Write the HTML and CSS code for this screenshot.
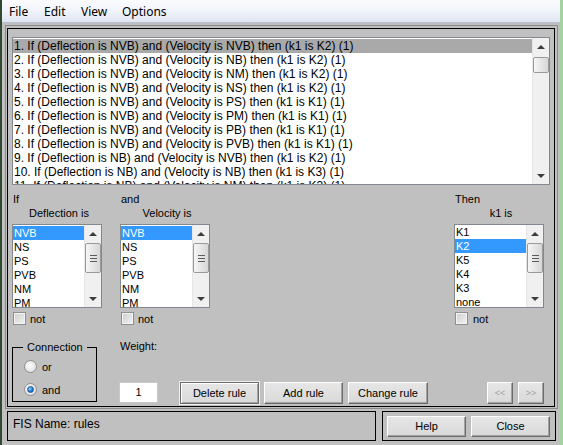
FILE: index.html
```html
<!DOCTYPE html>
<html>
<head>
<meta charset="utf-8">
<link rel="stylesheet" href="styles.css">
</head>
<body>
<div class="window">
  <div class="menubar">
    <span class="menu-item w35">File</span>
    <span class="menu-item w37">Edit</span>
    <span class="menu-item w41">View</span>
    <span class="menu-item">Options</span>
  </div>

  <div class="panel-outer">
    <div class="panel">
      <div class="rules">
        <div class="rules-items">
          <div class="row sel">1. If (Deflection is NVB) and (Velocity is NVB) then (k1 is K2) (1)</div>
          <div class="row">2. If (Deflection is NVB) and (Velocity is NB) then (k1 is K2) (1)</div>
          <div class="row">3. If (Deflection is NVB) and (Velocity is NM) then (k1 is K2) (1)</div>
          <div class="row">4. If (Deflection is NVB) and (Velocity is NS) then (k1 is K2) (1)</div>
          <div class="row">5. If (Deflection is NVB) and (Velocity is PS) then (k1 is K1) (1)</div>
          <div class="row">6. If (Deflection is NVB) and (Velocity is PM) then (k1 is K1) (1)</div>
          <div class="row">7. If (Deflection is NVB) and (Velocity is PB) then (k1 is K1) (1)</div>
          <div class="row">8. If (Deflection is NVB) and (Velocity is PVB) then (k1 is K1) (1)</div>
          <div class="row">9. If (Deflection is NB) and (Velocity is NVB) then (k1 is K2) (1)</div>
          <div class="row">10. If (Deflection is NB) and (Velocity is NB) then (k1 is K3) (1)</div>
          <div class="row">11. If (Deflection is NB) and (Velocity is NM) then (k1 is K3) (1)</div>
        </div>
        <div class="vscroll">
          <div class="arrow-box"><span class="tri-up"></span></div>
          <div class="thumb thumb-rules"></div>
          <div class="track"></div>
          <div class="arrow-box"><span class="tri-down"></span></div>
        </div>
      </div>

      <div class="selectors">
        <div class="col">
          <div class="lbl">If</div>
          <div class="lbl center">Deflection is</div>
          <div class="listbox">
            <div class="items">
              <div class="item sel">NVB</div>
              <div class="item">NS</div>
              <div class="item">PS</div>
              <div class="item">PVB</div>
              <div class="item">NM</div>
              <div class="item">PM</div>
            </div>
            <div class="vscroll">
              <div class="arrow-box"><span class="tri-up"></span></div>
              <div class="thumb thumb-small"><span class="grip"></span></div>
              <div class="track"></div>
              <div class="arrow-box"><span class="tri-down"></span></div>
            </div>
          </div>
          <div class="check"><span class="cbox"></span><span class="ctext">not</span></div>
        </div>

        <div class="col col2">
          <div class="lbl">and</div>
          <div class="lbl center">Velocity is</div>
          <div class="listbox">
            <div class="items">
              <div class="item sel">NVB</div>
              <div class="item">NS</div>
              <div class="item">PS</div>
              <div class="item">PVB</div>
              <div class="item">NM</div>
              <div class="item">PM</div>
            </div>
            <div class="vscroll">
              <div class="arrow-box"><span class="tri-up"></span></div>
              <div class="thumb thumb-small"><span class="grip"></span></div>
              <div class="track"></div>
              <div class="arrow-box"><span class="tri-down"></span></div>
            </div>
          </div>
          <div class="check"><span class="cbox"></span><span class="ctext">not</span></div>
        </div>

        <div class="col col3">
          <div class="lbl">Then</div>
          <div class="lbl center">k1 is</div>
          <div class="listbox">
            <div class="items items-k">
              <div class="item">K1</div>
              <div class="item sel">K2</div>
              <div class="item">K5</div>
              <div class="item">K4</div>
              <div class="item">K3</div>
              <div class="item">none</div>
            </div>
            <div class="vscroll">
              <div class="arrow-box"><span class="tri-up"></span></div>
              <div class="thumb thumb-small thumb-k"><span class="grip"></span></div>
              <div class="track"></div>
              <div class="arrow-box"><span class="tri-down"></span></div>
            </div>
          </div>
          <div class="check"><span class="cbox"></span><span class="ctext ctext-k">not</span></div>
        </div>
      </div>

      <div class="bottom">
        <fieldset class="conn">
          <legend>Connection</legend>
          <div class="radio-row first"><span class="radio"></span><span class="rtext">or</span></div>
          <div class="radio-row second"><span class="radio on"><span class="dot"></span></span><span class="rtext">and</span></div>
        </fieldset>
        <div class="controls">
          <div class="weight-lbl">Weight:</div>
          <div class="btn-row">
            <div class="input">1</div>
            <button class="btn default w-del">Delete rule</button>
            <button class="btn w-add">Add rule</button>
            <button class="btn w-chg">Change rule</button>
            <button class="btn nav nav-prev" disabled>&lt;&lt;</button>
            <button class="btn nav" disabled>&gt;&gt;</button>
          </div>
        </div>
      </div>
    </div>
  </div>

  <div class="status-row">
    <div class="fis">FIS Name: rules</div>
    <div class="actions">
      <button class="btn w-help">Help</button>
      <button class="btn w-help">Close</button>
    </div>
  </div>
</div>
</body>
</html>
```

FILE: styles.css
```css
* { box-sizing: border-box; }

body {
  margin: 0;
  background: #c0c0c0;
  font: 11px/14px "Liberation Sans", Arial, sans-serif;
  color: #000;
}

.window {
  width: 563px;
  height: 445px;
  border-left: 2px solid #2f4a30;
  border-right: 3px solid #a3d3a0;
  overflow: hidden;
  display: flex;
  flex-direction: column;
}

/* menu bar */
.menubar {
  height: 23px;
  flex: none;
  display: flex;
  align-items: center;
  padding-left: 7px;
  background: linear-gradient(#fbfcfe 0%, #f1f4fa 45%, #dfe6f2 100%);
  border-bottom: 1px solid #b7bfcc;
  font: 12px "Noto Sans", "Open Sans", sans-serif;
  color: #000;
}
.menu-item { display: inline-block; }
.w35 { width: 35px; }
.w37 { width: 37px; }
.w41 { width: 41px; }

/* main panel */
.panel-outer {
  margin: 2px 0 0 3px;
  width: 553px;
  border: 1px solid #8a8a8a;
  padding: 2px 2px 1px 1px;
  flex: none;
}
.panel {
  border: 1px solid #000;
  height: 379px;
}

/* rules list */
.rules {
  margin: 8px 0 0 4px;
  width: 538px;
  height: 148px;
  border: 1px solid #828790;
  background: #fff;
  display: flex;
}
.rules-items {
  flex: 1;
  padding-top: 1px;
  overflow: hidden;
  font-size: 12px;
}
.row {
  height: 14px;
  line-height: 14px;
  padding-left: 1px;
  white-space: nowrap;
}
.row.sel { background: #a9a9a9; }

.vscroll {
  width: 17px;
  flex: none;
  background: #f0f0f0;
  border-left: 1px solid #e6e6e6;
  display: flex;
  flex-direction: column;
}
.arrow-box {
  height: 17px;
  flex: none;
  display: flex;
  align-items: center;
  justify-content: center;
}
.tri-up {
  width: 0; height: 0;
  border-left: 4px solid transparent;
  border-right: 4px solid transparent;
  border-bottom: 4px solid #3c3c3c;
}
.tri-down {
  width: 0; height: 0;
  border-left: 4px solid transparent;
  border-right: 4px solid transparent;
  border-top: 4px solid #3c3c3c;
}
.track { flex: 1; }
.thumb {
  flex: none;
  margin: 1px 0 0 0;
  border: 1px solid #9a9a9a;
  border-radius: 2px;
  background: linear-gradient(90deg, #f6f6f6, #e6e6e6 50%, #d6d6d6);
  display: flex;
  align-items: center;
  justify-content: center;
}
.thumb-rules { height: 16px; margin-top: 2px; }
.thumb-small { height: 30px; }
.grip {
  width: 7px;
  height: 7px;
  background: repeating-linear-gradient(#5c5c5c 0 1px, transparent 1px 3px);
}

/* selectors */
.selectors {
  display: flex;
  margin: 7px 10px 0 4px;
}
.col { width: 90px; }
.col2 { margin-left: 18px; }
.col3 { margin-left: auto; }
.lbl { height: 14px; padding-left: 1px; white-space: nowrap; }
.lbl.center { text-align: center; padding-left: 4px; }

.listbox {
  margin-top: 4px;
  height: 84px;
  border: 1px solid #828790;
  background: #fff;
  display: flex;
}
.listbox .items {
  flex: 1;
  padding-top: 1px;
  overflow: hidden;
}
.listbox .items-k { padding-top: 0; }
.item {
  height: 14px;
  line-height: 14px;
  padding-left: 1px;
}
.item.sel { background: #3399ff; color: #fff; }

.check {
  margin-top: 4px;
  margin-left: 1px;
  display: flex;
  align-items: center;
  height: 13px;
}
.cbox {
  width: 13px;
  height: 13px;
  border: 1px solid #8e8f8f;
  background: linear-gradient(135deg, #cfcfcf, #f2f2f2);
  box-shadow: inset 0 0 0 1px #f4f4f4;
}
.ctext { margin-left: 4px; }
.ctext-k { margin-left: 5px; }

/* bottom controls */
.bottom {
  display: flex;
  margin: 14px 0 0 4px;
}
.conn {
  margin: 1px 0 0 0;
  width: 85px;
  height: 62px;
  border: 1px solid #000;
  padding: 0 0 0 10px;
}
.conn legend {
  padding: 0 4px;
  line-height: 14px;
}
.radio-row {
  display: flex;
  align-items: center;
  height: 13px;
  margin-left: 1px;
}
.radio-row.first { margin-top: 6px; }
.radio-row.second { margin-top: 10px; }
.radio {
  width: 13px;
  height: 13px;
  border-radius: 50%;
  border: 1px solid #8f8f8f;
  background: radial-gradient(circle at 40% 40%, #ffffff, #e2e2e2 70%, #cfcfcf);
  display: flex;
  align-items: center;
  justify-content: center;
}
.dot {
  width: 7px;
  height: 7px;
  border-radius: 50%;
  background: radial-gradient(circle at 35% 35%, #8fd0ff, #1f78cc 60%, #0b4f94);
  border: 1px solid #1b5a96;
}
.rtext { margin-left: 5px; }

.controls { margin-left: 22px; flex: 1; }
.weight-lbl { padding-left: 1px; height: 14px; }
.btn-row {
  margin-top: 29px;
  display: flex;
  align-items: flex-start;
}
.input {
  width: 39px;
  height: 21px;
  background: #fff;
  border: 1px solid #c9c9c9;
  text-align: center;
  line-height: 19px;
}

.btn {
  height: 22px;
  padding: 0;
  font: 11px "Liberation Sans", Arial, sans-serif;
  color: #000;
  background: linear-gradient(#e6e6e6, #d9d9d9);
  border: 1px solid;
  border-color: #ffffff #6b6b6b #6b6b6b #ffffff;
  box-shadow: inset -1px -1px 0 #a3a3a3;
  margin-left: 5px;
}
.btn.default {
  border-color: #6b6b6b;
  box-shadow: 0 0 0 1px #efefef, inset 1px 1px 0 #fff, inset -1px -1px 0 #a3a3a3;
}
.w-del { width: 79px; margin-left: 22px; }
.w-add { width: 79px; }
.w-chg { width: 80px; }
.nav {
  width: 26px;
  color: #a0a0a0;
  font-size: 9px;
}
.nav-prev { margin-left: 59px; }

/* status row */
.status-row {
  display: flex;
  margin: 2px 0 0 5px;
  height: 30px;
  flex: none;
}
.fis {
  width: 369px;
  border: 1px solid #000;
  padding: 5px 0 0 5px;
  font-size: 12px;
}
.actions {
  margin-left: 6px;
  width: 174px;
  border: 1px solid #000;
  display: flex;
  align-items: center;
  padding-left: 4px;
}
.w-help { width: 79px; height: 21px; }
.actions .btn:first-child { margin-left: 0; }
.actions .btn + .btn { margin-left: 5px; }
```
